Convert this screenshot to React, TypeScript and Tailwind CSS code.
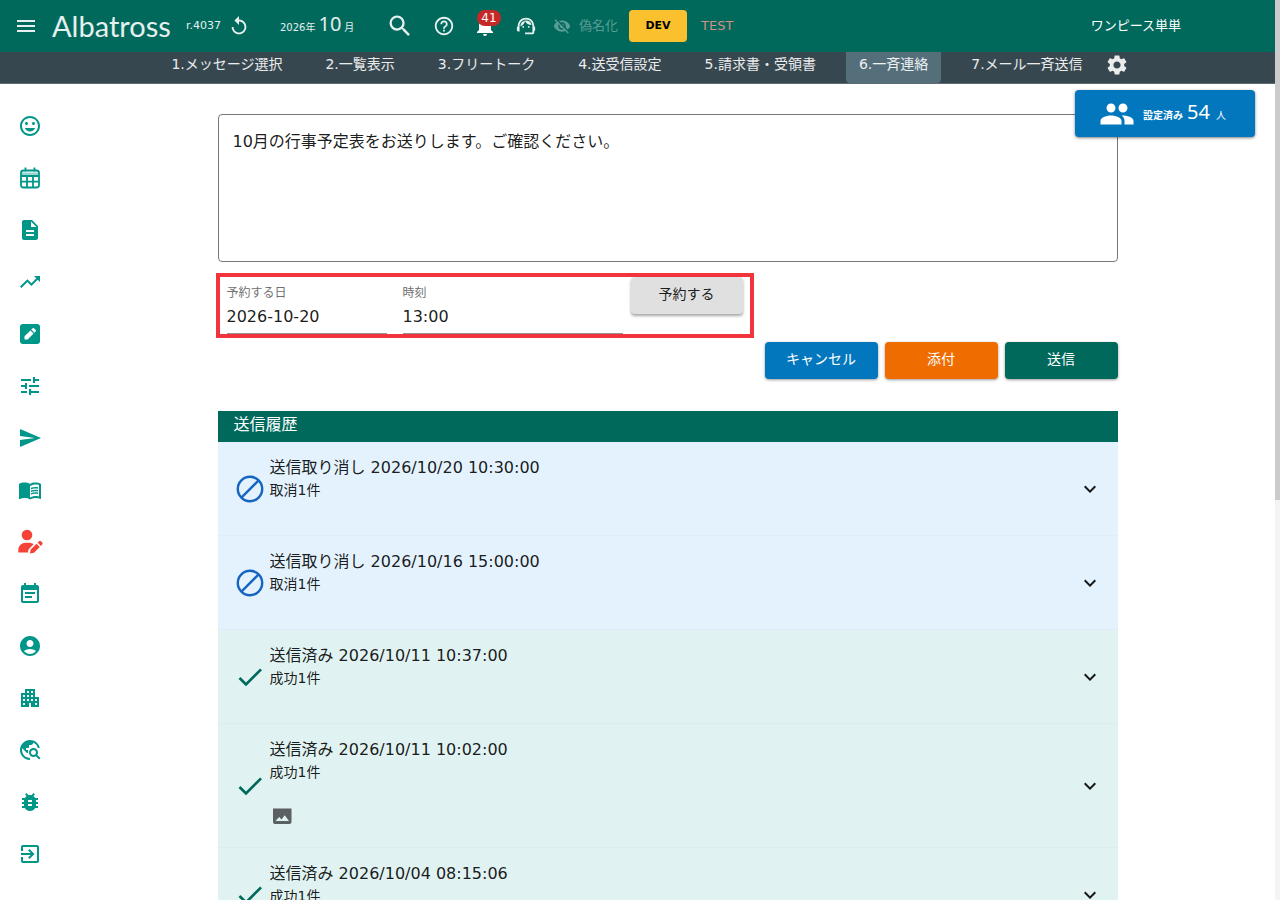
import React from 'react';
import {
  MdAccountCircle,
  MdApartment,
  MdBugReport,
  MdCheck,
  MdDescription,
  MdEventNote,
  MdExitToApp,
  MdExpandMore,
  MdHelpOutline,
  MdMenu,
  MdMenuBook,
  MdMood,
  MdNotifications,
  MdPeople,
  MdReplay,
  MdSearch,
  MdSend,
  MdSettings,
  MdSupportAgent,
  MdTravelExplore,
  MdTrendingUp,
  MdTune,
  MdVisibilityOff,
} from 'react-icons/md';

const CalendarIcon: React.FC = () => (
  <svg className="h-6 w-6" viewBox="0 0 24 24" fill="none" stroke="currentColor" strokeWidth={1.8}>
    <rect x="3" y="4.5" width="18" height="17" rx="2.5" />
    <path d="M7.5 1.5v4M16.5 1.5v4M3 10h18M3 15.7h18M9 10v11M15 10v11" />
    <path d="M4 6.5h16v3H4z" fill="currentColor" stroke="none" opacity={0.4} />
  </svg>
);

const PencilBoxIcon: React.FC = () => (
  <svg className="h-6 w-6" viewBox="0 0 24 24">
    <rect x="2" y="2" width="20" height="20" rx="3" fill="currentColor" />
    <path d="M6.500 17.500v-3.200l5.900-5.900 3.200 3.200-5.900 5.900zM13.200 7.600l1.200-1.200a1.300 1.300 0 0 1 1.800 0l1.400 1.400a1.300 1.300 0 0 1 0 1.800l-1.200 1.200z" fill="white" />
  </svg>
);

const UserEditIcon: React.FC = () => (
  <svg className="h-7 w-7" viewBox="0 0 28 28" fill="currentColor">
    <circle cx="11" cy="7" r="5.300" />
    <path d="M2.300 24.500v-2.300c0-4.300 3.300-7.400 7.500-7.400h3c1.900 0 3.500.5 4.800 1.500l-4.900 4.900-.9 3.300z" />
    <path d="M13.900 25.500l.8-4 5.800-5.800 3.300 3.300-5.800 5.800zM21.600 14.600l1.200-1.200a1.700 1.700 0 0 1 2.400 0l.9.9a1.700 1.700 0 0 1 0 2.400l-1.200 1.200z" />
  </svg>
);

const CancelIcon: React.FC = () => (
  <svg className="h-8 w-8 text-[#1565c0]" viewBox="0 0 32 32" fill="none" stroke="currentColor" strokeWidth={2.4}>
    <circle cx="16" cy="16" r="12.2" />
    <path d="M24.6 7.4L7.4 24.6" />
  </svg>
);

const ImageIcon: React.FC = () => (
  <svg className="h-6 w-6 text-[#5b6162]" viewBox="0 0 24 24" fill="currentColor">
    <path d="M3 4.5h18.5v13.500a2 2 0 0 1-2 2H5a2 2 0 0 1-2-2zM5.500 17h13.500l-4.300-5.700-3.200 4.200-2.300-2.500z" fillRule="evenodd" />
  </svg>
);

const sideItems = [
  { label: '園児', icon: <MdMood size={24} /> },
  { label: 'カレンダー', icon: <CalendarIcon /> },
  { label: '書類', icon: <MdDescription size={24} /> },
  { label: '推移', icon: <MdTrendingUp size={24} /> },
  { label: '編集', icon: <PencilBoxIcon /> },
  { label: '調整', icon: <MdTune size={24} /> },
  { label: '連絡', icon: <MdSend size={24} /> },
  { label: '手引き', icon: <MdMenuBook size={24} /> },
  { label: '利用者編集', icon: <UserEditIcon />, active: true },
  { label: '予定', icon: <MdEventNote size={24} /> },
  { label: 'アカウント', icon: <MdAccountCircle size={24} /> },
  { label: '施設', icon: <MdApartment size={24} /> },
  { label: '検索', icon: <MdTravelExplore size={24} /> },
  { label: '不具合', icon: <MdBugReport size={24} /> },
  { label: 'ログアウト', icon: <MdExitToApp size={24} /> },
];

const tabs = [
  '1.メッセージ選択',
  '2.一覧表示',
  '3.フリートーク',
  '4.送受信設定',
  '5.請求書・受領書',
  '6.一斉連絡',
  '7.メール一斉送信',
];

interface HistoryEntry {
  title: string;
  result: string;
  canceled?: boolean;
  image?: boolean;
}

const history: HistoryEntry[] = [
  { title: '送信取り消し 2026/10/20 10:30:00', result: '取消1件', canceled: true },
  { title: '送信取り消し 2026/10/16 15:00:00', result: '取消1件', canceled: true },
  { title: '送信済み 2026/10/11 10:37:00', result: '成功1件' },
  { title: '送信済み 2026/10/11 10:02:00', result: '成功1件', image: true },
  { title: '送信済み 2026/10/04 08:15:06', result: '成功1件' },
];

const Header: React.FC = () => (
  <header className="flex h-[52px] shrink-0 items-center bg-[#00695c] pl-3.5 text-white/90">
    <button aria-label="メニュー"><MdMenu size={24} /></button>
    <a href="#" className="ml-3.5 w-[120px] font-['Lato'] text-[29px] leading-8">Albatross</a>
    <span className="ml-3.5 w-10 text-[11px]">r.4037</span>
    <button className="ml-0.5" aria-label="再読み込み"><MdReplay size={22} /></button>
    <button className="ml-[30px] flex w-[76px] items-baseline gap-[3px] whitespace-nowrap text-[10px] leading-6">
      2026年<span className="font-['Noto_Sans'] text-xl leading-6">10</span>月
    </button>
    <button className="ml-[30px]" aria-label="検索"><MdSearch size={28} /></button>
    <button className="ml-[19px]" aria-label="ヘルプ"><MdHelpOutline size={22} /></button>
    <button className="relative ml-[18px] text-white" aria-label="お知らせ">
      <MdNotifications size={24} />
      <span className="absolute -top-1 left-1 flex h-4 w-6 items-center justify-center rounded-full bg-[#c62828] text-xs">
        41
      </span>
    </button>
    <button className="ml-[18px]" aria-label="サポート"><MdSupportAgent size={22} /></button>
    <button className="ml-4 flex items-center gap-2 text-[13px] text-white/35">
      <MdVisibilityOff size={18} />
      偽名化
    </button>
    <button className="ml-[11px] h-8 w-[58px] rounded bg-[#fbc02d] text-[11px] font-bold text-black">DEV</button>
    <span className="ml-3.5 text-[13px] text-[#d39084]">TEST</span>
    <span className="mr-[94px] ml-auto text-[13px] text-white">ワンピース単単</span>
  </header>
);

const TabBar: React.FC = () => (
  <nav className="flex h-8 shrink-0 justify-center gap-[17px] border-b border-[#5f6d74] bg-[#37474f] pl-3 text-sm text-white/90">
    {tabs.map((tab) => (
      <a
        key={tab}
        href="#"
        className={`rounded-b px-[13px] pt-0.5 leading-5 whitespace-nowrap ${tab.startsWith('6') ? 'bg-[#546e7a]' : ''}`}
      >
        {tab}
      </a>
    ))}
    <button className="-ml-2 self-start pt-px" aria-label="設定"><MdSettings size={24} /></button>
  </nav>
);

const SideMenu: React.FC = () => (
  <nav className="flex w-[60px] shrink-0 flex-col pt-4 text-[#009688]">
    {sideItems.map((item) => (
      <a
        key={item.label}
        href="#"
        aria-label={item.label}
        className={`flex h-[52px] shrink-0 items-center justify-center ${item.active ? 'text-[#f44336]' : ''}`}
      >
        {item.icon}
      </a>
    ))}
  </nav>
);

const ReserveForm: React.FC = () => (
  <div className="-ml-0.5 mt-[11px] flex h-[65px] w-[538px] border-4 border-[#f2353c] pl-[7px]">
    <div className="flex w-40 flex-col border-b border-[#949494] pt-1.5">
      <label htmlFor="date" className="text-xs leading-5 text-[#707070]">予約する日</label>
      <input id="date" type="text" defaultValue="2026-10-20" className="w-full leading-7 text-black/90 outline-none" />
    </div>
    <div className="ml-4 flex w-[220px] flex-col border-b border-[#949494] pt-1.5">
      <label htmlFor="time" className="text-xs leading-5 text-[#707070]">時刻</label>
      <input id="time" type="text" defaultValue="13:00" className="w-full leading-7 text-black/90 outline-none" />
    </div>
    <button className="ml-2 h-[37px] w-28 rounded bg-[#e0e0e0] pb-1 text-sm text-black/90 shadow-[0_2px_3px_rgba(0,0,0,0.35)]">
      予約する
    </button>
  </div>
);

const HistoryRow: React.FC<{ entry: HistoryEntry }> = ({ entry }) => (
  <li className={entry.canceled ? 'bg-[#e3f2fd]' : 'bg-[#e0f2f1]'}>
    <button className="flex min-h-[94px] w-full items-center gap-1 border-b border-black/2 px-4 text-left text-black/90">
      {entry.canceled ? <CancelIcon /> : <MdCheck size={32} className="text-[#00695c]" />}
      <span className="flex flex-1 flex-col self-start pt-3.5">
        <span className="leading-6">{entry.title}</span>
        <span className="text-sm leading-5">{entry.result}</span>
        {entry.image && <span className="pt-[22px] pb-[19px]"><ImageIcon /></span>}
      </span>
      <MdExpandMore size={24} />
    </button>
  </li>
);

const App: React.FC = () => (
  <div className="flex h-screen overflow-hidden bg-white font-['DejaVu_Sans','Noto_Sans_CJK_JP',sans-serif]">
    <div className="flex min-w-0 flex-1 flex-col">
      <Header />
      <TabBar />
      <div className="relative flex min-h-0 flex-1">
        <SideMenu />
        <main className="min-w-0 flex-1 overflow-hidden">
          <div className="mx-auto max-w-[900px] pt-[30px]">
            <textarea
              aria-label="メッセージ"
              defaultValue="10月の行事予定表をお送りします。ご確認ください。"
              className="block h-[148px] w-full resize-none rounded border border-[#777] px-3.5 py-[15px] leading-6 text-black/90 outline-none"
            />
            <ReserveForm />
            <div className="mt-1 flex justify-end gap-[7px] text-sm text-white">
              <button className="h-[37px] w-[113px] rounded bg-[#0277bd] pb-1 shadow-[0_1px_3px_rgba(0,0,0,0.4)]">キャンセル</button>
              <button className="h-[37px] w-[113px] rounded bg-[#ef6c00] pb-1 shadow-[0_1px_3px_rgba(0,0,0,0.4)]">添付</button>
              <button className="h-[37px] w-[113px] rounded bg-[#00695c] pb-1 shadow-[0_1px_3px_rgba(0,0,0,0.4)]">送信</button>
            </div>
            <section className="mt-8">
              <h2 className="h-[31px] bg-[#00695c] px-4 leading-7 text-white">送信履歴</h2>
              <ul>
                {history.map((entry) => <HistoryRow key={entry.title} entry={entry} />)}
              </ul>
            </section>
          </div>
        </main>
        <button className="absolute top-1.5 right-5 flex h-[47px] w-[180px] items-center rounded bg-[#0277bd] pl-6 text-[10px] whitespace-nowrap text-white shadow-[0_1px_3px_rgba(0,0,0,0.5)]">
          <MdPeople size={36} />
          <span className="ml-2 flex items-baseline gap-1 leading-7">
            <span className="font-bold">設定済み</span>
            <span className="font-['Noto_Sans'] text-xl leading-7">54</span>
            <span className="ml-0.5">人</span>
          </span>
        </button>
      </div>
    </div>
    {/* scroll track */}
    <div className="w-[5px] shrink-0 bg-[#f4f4f4]">
      <div className="h-[500px] bg-[#cbcbcb]" />
    </div>
  </div>
);

export default App;
